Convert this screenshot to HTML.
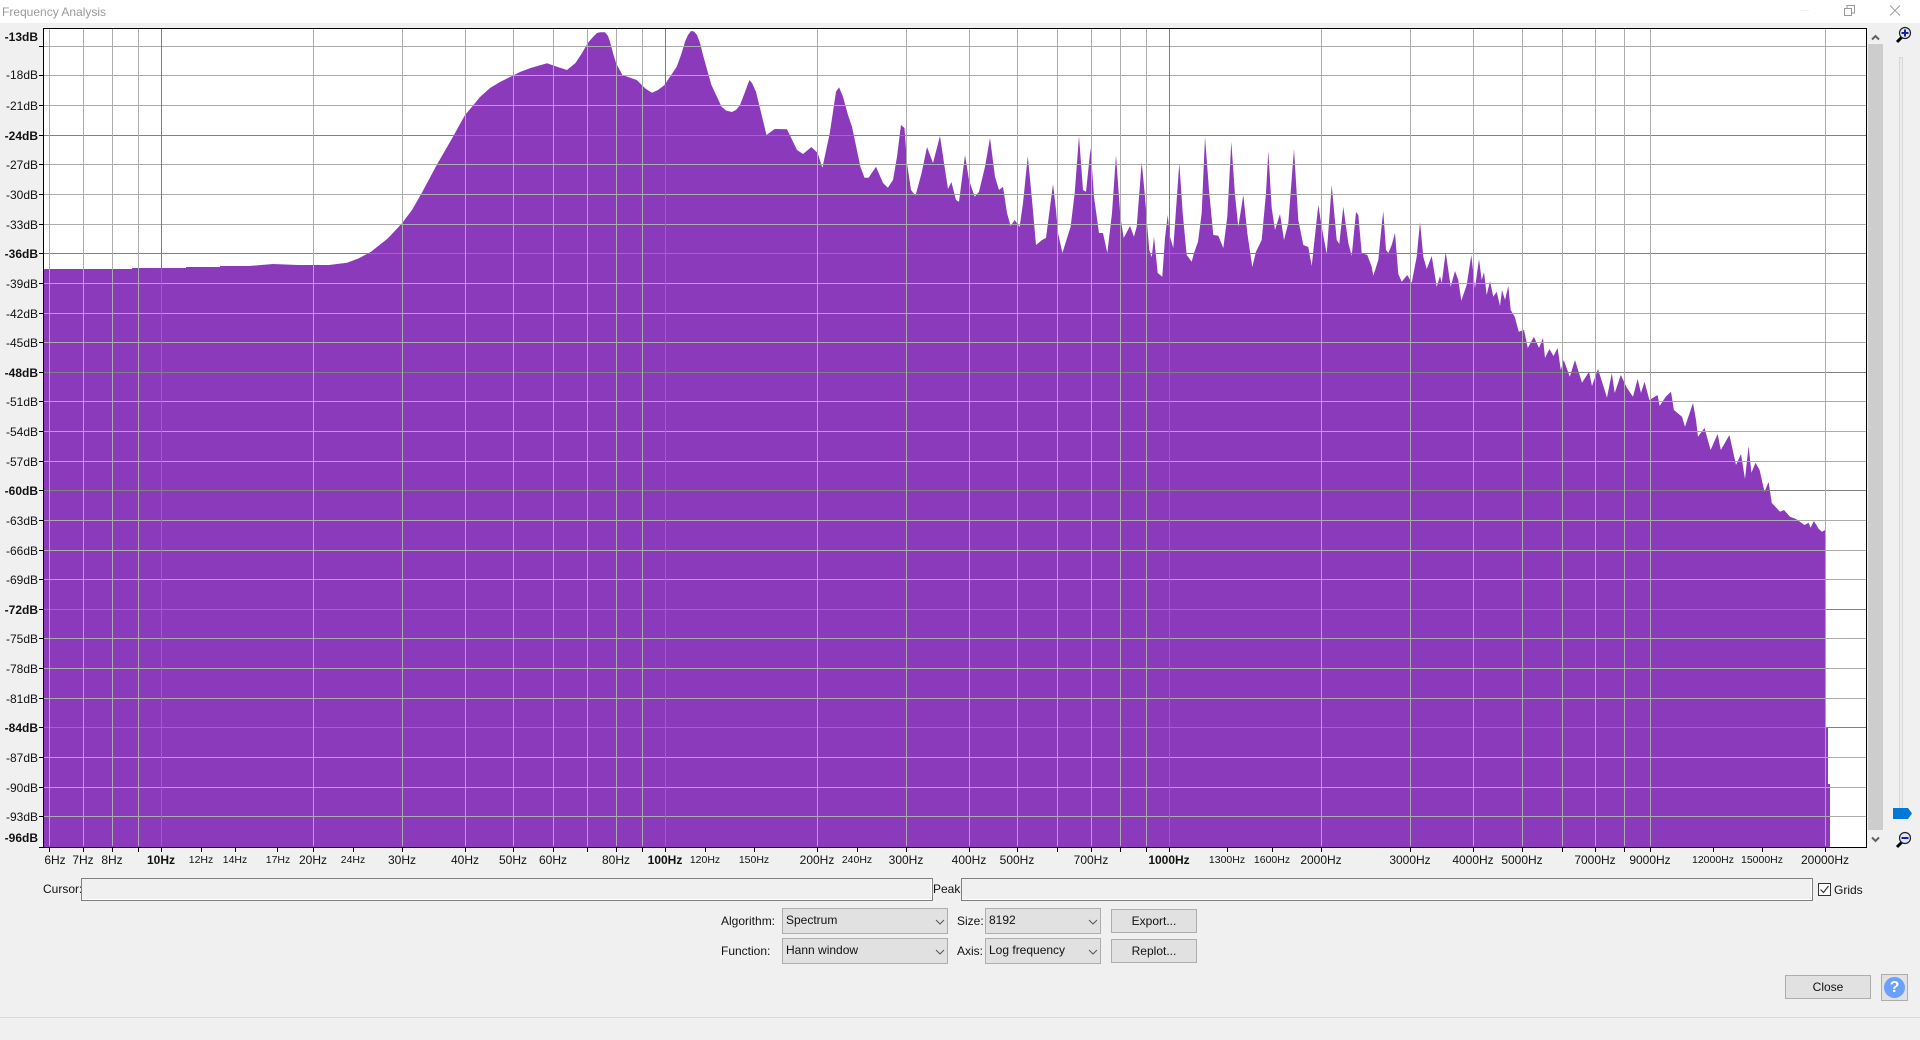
<!DOCTYPE html>
<html lang="en">
<head>
<meta charset="utf-8">
<title>Frequency Analysis</title>
<style>
html,body{margin:0;padding:0;width:1920px;height:1040px;overflow:hidden;background:#f0f0f0;font-family:"Liberation Sans",sans-serif;font-size:12px;color:#111}
.abs{position:absolute}
#titlebar{position:absolute;left:0;top:0;width:1920px;height:23px;background:#fff}
#title{position:absolute;left:2px;top:5px;color:#9a9a9a;font-size:12px;line-height:14px;white-space:nowrap}
svg{position:absolute;left:0;top:0}
.lbl{position:absolute;line-height:14px;white-space:nowrap;font-size:12px}
.box{position:absolute;box-sizing:border-box;border:1px solid #808080;box-shadow:inset -1px -1px 0 #fff;background:#f0f0f0}
.sel{position:absolute;box-sizing:border-box;height:26px;background:#e1e1e1;border:1px solid #adadad;line-height:23px;padding-left:3px;white-space:nowrap}
.sel svg{position:absolute;top:10px}
.btn{position:absolute;box-sizing:border-box;height:24px;width:86px;background:#e1e1e1;border:1px solid #adadad;text-align:center;line-height:22px}
#line{position:absolute;left:0;top:1017px;width:1920px;height:1px;background:#d9d9d9}
</style>
</head>
<body>
<div id="titlebar"><div id="title">Frequency Analysis</div></div>
<svg width="1920" height="1040" viewBox="0 0 1920 1040" font-family="'Liberation Sans',sans-serif" font-size="12" fill="#111">
<rect x="44" y="29" width="1822" height="818" fill="#fff"/>
<polygon fill="#8b3abc" points="44,847 44,269 132,269 132,268 186,268 186,267 220,267 220,266 249,266 273,264 298,265 329,265 347,262.7 359,258.3 371,251.7 388,238.3 402,223.3 412,210 422.4,191.7 436.7,165 453,136.7 465,115 473.5,105 480,97 490,88 500,82 510,77 520,72 530.6,68 547,63.3 557,66.7 567,70 575.5,63 582,53 587.8,43 593,37 597,33 600,32.3 605,32.3 608,36 610,41.7 613,53 616,63 622.4,75 636.7,80 640,83.3 646,89 652,92.7 658,90 664.5,85 676.7,66.7 681,55 685,41.7 688,35 691,31 694,31.5 697,35 700,43 703,55 711.4,85 721.6,106.7 726,110.5 731.8,112 736,110 740,105 745,92 749.4,80 752,83 756,91.7 766.5,135 774.7,129 787,129.3 797,150 803,154 811.4,147 817.6,153 822.4,167.7 829.8,133 836,91.7 839,87.3 843,96.7 848,115 852,126.7 860.4,166.7 864.5,177.7 868.6,177.7 876,166.7 883,183 887.8,187.7 893,180 897,156.7 901,125 904.5,128 907,163 911,190 915.5,195.7 921.6,173 927,147 933,163 940,136 944,163 948,189 951.4,182 956,200 959,201.7 965,155 969,180 974.7,196.7 979,191.7 985,166.7 990,138 995,176.7 999,190 1003,186.7 1007,213 1010.6,226 1014.7,220 1019.6,227 1023,203 1027.8,156 1032,200 1036,245 1042,240 1046,238 1053,184 1056,210 1058,233 1062.4,253 1070.6,226.7 1074.7,193 1079,136 1083,190 1086,191.7 1090.6,148 1094,196.7 1099,233 1103,233 1107.3,253 1112,213 1116,155 1120.4,216.7 1123.7,238 1130,226 1134,236.7 1136.7,226.7 1141.7,162 1145,196.7 1147.3,226.7 1149.3,250 1151.7,257.3 1154,236.7 1157.7,273 1162.3,276.7 1165,238 1167.7,215 1170,236.7 1173.3,248 1179.3,163 1182.7,213 1186.7,255 1191.7,261.7 1194,253 1198,241.7 1201.7,213 1205,137 1209,190 1213.3,235 1218.3,235.7 1223.3,248 1227.3,216.7 1231.3,141.7 1235,195 1238.3,226.7 1243.3,195 1247.3,233 1252.3,267 1256,251.7 1261.7,240 1266,193 1268.3,151 1271.7,208 1275,230 1280,214 1284,240 1288.3,223 1294,149 1298.3,220 1303.3,245 1308.3,247 1311.7,266 1318.3,205 1321.7,226.7 1326.7,254 1331.7,185 1336.7,240 1339.3,244 1343.3,206.7 1348.3,243 1351.7,256 1356,212 1358.3,215 1361.7,253 1367.3,255 1371.7,266.7 1373.3,275.7 1378.3,260 1381.7,225 1383.3,211 1386,250 1388.3,253 1391.7,245 1395,233 1398.3,274 1401.7,281.7 1407.3,275 1411.7,282.7 1416.7,256.7 1420,222 1423.3,256.7 1426.7,269 1431.7,256 1436.7,287 1440,276 1441.7,283 1445.7,252 1450.7,286.7 1455,271 1458.3,280 1461.3,300.7 1466.7,285 1471.3,255 1475,288 1479,259 1481.7,280 1484,272 1486.7,295 1490,281 1493.3,296.7 1496.7,291.7 1500,306 1502,290 1505,300 1508.3,286 1510.7,310 1514.7,316.7 1518.8,331.7 1524,330 1527.8,348 1533.9,336.7 1539,348 1543,338 1545,358 1549.4,349 1553.5,356 1557.6,348 1560.8,370 1563.7,360 1569.8,376.7 1575,360 1579,373 1582,382.7 1589,371.7 1592,386 1598,369 1602.4,383 1607,397.7 1611.8,373 1614.7,393 1620.8,375 1627,388 1633,396.7 1637.6,379 1641,393 1644.5,381.7 1649.4,400 1657.6,395 1659.6,406 1665.7,396.7 1671,391.7 1673.9,410 1682,416.7 1685,426.7 1693,403 1696,420 1698,436.7 1704.5,428 1710.6,450 1717.6,434 1720.8,450 1729.4,435 1736,465 1741,454 1745,479 1748.6,446 1751.4,472.7 1755.5,462.7 1759.6,470 1764.5,491.7 1768.6,482 1771.8,503 1780,511.7 1784,510 1790,516.7 1796,519 1804.5,525 1808.6,522.7 1810.6,527.7 1813.9,521 1818.8,529 1822,531.7 1825,530 1825,640 1826,640 1826,727 1828,727 1828,784 1830,784 1830,847"/>
<g shape-rendering="crispEdges" stroke-width="1" fill="none">
<path stroke="#ababab" d="M44 46.5H1866M44 75.5H1866M44 105.5H1866M44 164.5H1866M44 194.5H1866M44 224.5H1866M44 283.5H1866M44 313.5H1866M44 342.5H1866M44 401.5H1866M44 431.5H1866M44 461.5H1866M44 520.5H1866M44 550.5H1866M44 579.5H1866M44 638.5H1866M44 668.5H1866M44 698.5H1866M44 757.5H1866M44 787.5H1866M44 816.5H1866"/>
<path stroke="#828282" d="M44 135.5H1866M44 253.5H1866M44 372.5H1866M44 490.5H1866M44 609.5H1866M44 727.5H1866"/>
<path stroke="#ababab" d="M49.5 29V846M83.5 29V846M112.5 29V846M138.5 29V846M313.5 29V846M402.5 29V846M465.5 29V846M513.5 29V846M553.5 29V846M587.5 29V846M616.5 29V846M642.5 29V846M817.5 29V846M906.5 29V846M969.5 29V846M1017.5 29V846M1057.5 29V846M1091.5 29V846M1120.5 29V846M1146.5 29V846M1321.5 29V846M1410.5 29V846M1473.5 29V846M1522.5 29V846M1562.5 29V846M1595.5 29V846M1624.5 29V846M1650.5 29V846M1825.5 29V846"/>
<path stroke="#7c7c7c" d="M161.5 29V846M665.5 29V846M1169.5 29V846"/>
<path stroke="#000" d="M43.5 28V848M43 28.5H1867M1866.5 28V848M39 847.5H1867"/>
<path stroke="#000" d="M39 46.5H43M39 75.5H43M39 105.5H43M39 135.5H43M39 164.5H43M39 194.5H43M39 224.5H43M39 253.5H43M39 283.5H43M39 313.5H43M39 342.5H43M39 372.5H43M39 401.5H43M39 431.5H43M39 461.5H43M39 490.5H43M39 520.5H43M39 550.5H43M39 579.5H43M39 609.5H43M39 638.5H43M39 668.5H43M39 698.5H43M39 727.5H43M39 757.5H43M39 787.5H43M39 816.5H43"/>
<path stroke="#000" d="M49.5 848V852M83.5 848V852M112.5 848V852M138.5 848V852M161.5 848V852M201.5 848V852M235.5 848V852M277.5 848V852M313.5 848V852M353.5 848V852M402.5 848V852M465.5 848V852M513.5 848V852M553.5 848V852M587.5 848V852M616.5 848V852M642.5 848V852M665.5 848V852M705.5 848V852M754.5 848V852M817.5 848V852M857.5 848V852M906.5 848V852M969.5 848V852M1017.5 848V852M1057.5 848V852M1091.5 848V852M1120.5 848V852M1146.5 848V852M1169.5 848V852M1227.5 848V852M1272.5 848V852M1321.5 848V852M1410.5 848V852M1473.5 848V852M1522.5 848V852M1562.5 848V852M1595.5 848V852M1624.5 848V852M1650.5 848V852M1713.5 848V852M1762.5 848V852M1825.5 848V852"/>
</g>
<g text-anchor="end">
<text x="38" y="41" font-weight="bold">-13dB</text>
<text x="38" y="79">-18dB</text>
<text x="38" y="110">-21dB</text>
<text x="38" y="140" font-weight="bold">-24dB</text>
<text x="38" y="169">-27dB</text>
<text x="38" y="199">-30dB</text>
<text x="38" y="229">-33dB</text>
<text x="38" y="258" font-weight="bold">-36dB</text>
<text x="38" y="288">-39dB</text>
<text x="38" y="318">-42dB</text>
<text x="38" y="347">-45dB</text>
<text x="38" y="377" font-weight="bold">-48dB</text>
<text x="38" y="406">-51dB</text>
<text x="38" y="436">-54dB</text>
<text x="38" y="466">-57dB</text>
<text x="38" y="495" font-weight="bold">-60dB</text>
<text x="38" y="525">-63dB</text>
<text x="38" y="555">-66dB</text>
<text x="38" y="584">-69dB</text>
<text x="38" y="614" font-weight="bold">-72dB</text>
<text x="38" y="643">-75dB</text>
<text x="38" y="673">-78dB</text>
<text x="38" y="703">-81dB</text>
<text x="38" y="732" font-weight="bold">-84dB</text>
<text x="38" y="762">-87dB</text>
<text x="38" y="792">-90dB</text>
<text x="38" y="821">-93dB</text>
<text x="38" y="842" font-weight="bold">-96dB</text>
</g>
<g text-anchor="middle">
<text x="55" y="864">6Hz</text>
<text x="83" y="864">7Hz</text>
<text x="112" y="864">8Hz</text>
<text x="161" y="864" font-weight="bold">10Hz</text>
<text x="201" y="863" font-size="10.5">12Hz</text>
<text x="235" y="863" font-size="10.5">14Hz</text>
<text x="278" y="863" font-size="10.5">17Hz</text>
<text x="313" y="864">20Hz</text>
<text x="353" y="863" font-size="10.5">24Hz</text>
<text x="402" y="864">30Hz</text>
<text x="465" y="864">40Hz</text>
<text x="513" y="864">50Hz</text>
<text x="553" y="864">60Hz</text>
<text x="616" y="864">80Hz</text>
<text x="665" y="864" font-weight="bold">100Hz</text>
<text x="705" y="863" font-size="10.5">120Hz</text>
<text x="754" y="863" font-size="10.5">150Hz</text>
<text x="817" y="864">200Hz</text>
<text x="857" y="863" font-size="10.5">240Hz</text>
<text x="906" y="864">300Hz</text>
<text x="969" y="864">400Hz</text>
<text x="1017" y="864">500Hz</text>
<text x="1091" y="864">700Hz</text>
<text x="1169" y="864" font-weight="bold">1000Hz</text>
<text x="1227" y="863" font-size="10.5">1300Hz</text>
<text x="1272" y="863" font-size="10.5">1600Hz</text>
<text x="1321" y="864">2000Hz</text>
<text x="1410" y="864">3000Hz</text>
<text x="1473" y="864">4000Hz</text>
<text x="1522" y="864">5000Hz</text>
<text x="1595" y="864">7000Hz</text>
<text x="1650" y="864">9000Hz</text>
<text x="1713" y="863" font-size="10.5">12000Hz</text>
<text x="1762" y="863" font-size="10.5">15000Hz</text>
<text x="1825" y="864">20000Hz</text>
</g>
<!-- window buttons -->
<path d="M1800 10.5H1809" stroke="#f0f0f0" fill="none"/>
<g fill="none" stroke="#999" shape-rendering="crispEdges"><rect x="1844.5" y="8.5" width="7" height="7" fill="#fff"/><path d="M1847 8V5.5H1854.5V13H1852"/></g>
<path d="M1890 5.5L1900 15.5M1900 5.5L1890 15.5" stroke="#a0a0a0" stroke-width="1" fill="none"/>
<!-- scrollbar -->
<rect x="1868" y="44" width="15" height="786" fill="#cdcdcd"/>
<path d="M1872 39.5L1875.5 36L1879 39.5" stroke="#606060" stroke-width="2" fill="none"/>
<path d="M1872 837.5L1875.5 841L1879 837.5" stroke="#606060" stroke-width="2" fill="none"/>
<!-- slider -->
<rect x="1899.5" y="57.5" width="3" height="752" fill="#ececec" stroke="#d8d8d8"/>
<polygon points="1893,808 1908,808 1912,813.5 1908,819 1893,819" fill="#0078d7"/>
<!-- zoom in -->
<path d="M1897 42L1902 37" stroke="#000" stroke-width="3" fill="none"/>
<circle cx="1905" cy="33" r="5.5" fill="#dfe6f5" stroke="#222" stroke-width="1.2"/>
<path d="M1905 29.5V36.5M1901.5 33H1908.5" stroke="#1c1ca8" stroke-width="2" fill="none"/>
<!-- zoom out -->
<path d="M1897 847L1902 842" stroke="#000" stroke-width="3" fill="none"/>
<circle cx="1905" cy="838" r="5.5" fill="#dfe6f5" stroke="#222" stroke-width="1.2"/>
<path d="M1901.5 838H1908.5" stroke="#1c1ca8" stroke-width="2" fill="none"/>
</svg>

<div class="lbl" style="left:43px;top:882px">Cursor:</div>
<div class="box" style="left:81px;top:878px;width:852px;height:23px"></div>
<div class="lbl" style="left:933px;top:882px">Peak:</div>
<div class="box" style="left:961px;top:878px;width:852px;height:23px"></div>
<svg class="abs" style="left:1818px;top:883px" width="14" height="14" viewBox="0 0 14 14"><rect x=".5" y=".5" width="12" height="12" fill="#fff" stroke="#333"/><path d="M2.5 6.5L5.5 9.5L10.5 3" stroke="#333" stroke-width="1.2" fill="none"/></svg>
<div class="lbl" style="left:1834px;top:883px">Grids</div>

<div class="lbl" style="left:721px;top:914px">Algorithm:</div>
<div class="sel" style="left:782px;top:908px;width:166px">Spectrum<svg style="left:152px" width="10" height="7" viewBox="0 0 10 7"><path d="M1 1L5 5L9 1" stroke="#555" fill="none"/></svg></div>
<div class="lbl" style="left:957px;top:914px">Size:</div>
<div class="sel" style="left:985px;top:908px;width:116px">8192<svg style="left:102px" width="10" height="7" viewBox="0 0 10 7"><path d="M1 1L5 5L9 1" stroke="#555" fill="none"/></svg></div>
<div class="btn" style="left:1111px;top:909px">Export...</div>

<div class="lbl" style="left:721px;top:944px">Function:</div>
<div class="sel" style="left:782px;top:938px;width:166px">Hann window<svg style="left:152px" width="10" height="7" viewBox="0 0 10 7"><path d="M1 1L5 5L9 1" stroke="#555" fill="none"/></svg></div>
<div class="lbl" style="left:957px;top:944px">Axis:</div>
<div class="sel" style="left:985px;top:938px;width:116px">Log frequency<svg style="left:102px" width="10" height="7" viewBox="0 0 10 7"><path d="M1 1L5 5L9 1" stroke="#555" fill="none"/></svg></div>
<div class="btn" style="left:1111px;top:939px">Replot...</div>

<div class="btn" style="left:1785px;top:975px">Close</div>
<div class="abs" style="left:1881px;top:974px;width:27px;height:27px;box-sizing:border-box;border:1px solid #adadad;background:#e1e1e1"></div>
<div class="abs" style="left:1884px;top:977px;width:21px;height:21px;border-radius:50%;background:#6aa0ff;color:#fff;font-weight:bold;font-size:16px;line-height:21px;text-align:center">?</div>
<div id="line"></div>
</body>
</html>
